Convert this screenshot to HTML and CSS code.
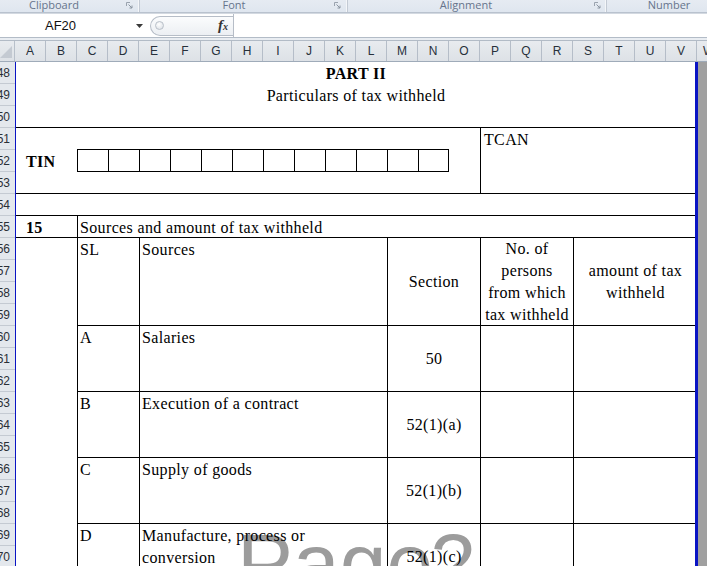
FILE: index.html
```html
<!DOCTYPE html>
<html>
<head>
<meta charset="utf-8">
<link rel="stylesheet" href="styles.css">
</head>
<body>
<div class="ribbon">
  <div class="grp g1"><span class="lbl">Clipboard</span><svg class="launch" width="7" height="7" viewBox="0 0 7 7"><path d="M0.5 4V0.5H4" fill="none" stroke="#9aa3ae"/><path d="M2.5 2.5L6 6M6 3.5V6H3.5" fill="none" stroke="#8a94a0"/></svg></div>
  <div class="grp g2"><span class="lbl">Font</span><svg class="launch" width="7" height="7" viewBox="0 0 7 7"><path d="M0.5 4V0.5H4" fill="none" stroke="#9aa3ae"/><path d="M2.5 2.5L6 6M6 3.5V6H3.5" fill="none" stroke="#8a94a0"/></svg></div>
  <div class="grp g3"><span class="lbl">Alignment</span><svg class="launch" width="7" height="7" viewBox="0 0 7 7"><path d="M0.5 4V0.5H4" fill="none" stroke="#9aa3ae"/><path d="M2.5 2.5L6 6M6 3.5V6H3.5" fill="none" stroke="#8a94a0"/></svg></div>
  <div class="grp g4"><span class="lbl">Number</span></div>
</div>
<div class="fbar">
  <div class="namebox"><span class="nbtext">AF20</span><svg class="nbarrow" width="7" height="4" viewBox="0 0 7 4"><path d="M0 0H7L3.5 4Z" fill="#3a3a3a"/></svg></div>
  <div class="fxzone"><div class="pill"><span class="knob"></span><span class="fx"><i>f</i><span class="fxx">x</span></span></div></div>
  <div class="finput"></div>
</div>
<div class="gap"></div>
<div class="colhead">
  <div class="corner"><svg width="14" height="20" viewBox="0 0 14 20"><path d="M12 5V17H0Z" fill="#c4cad2"/></svg></div>
  <div class="ch">A</div><div class="ch">B</div><div class="ch">C</div><div class="ch">D</div><div class="ch">E</div><div class="ch">F</div><div class="ch">G</div><div class="ch">H</div><div class="ch">I</div><div class="ch">J</div><div class="ch">K</div><div class="ch">L</div><div class="ch">M</div><div class="ch">N</div><div class="ch">O</div><div class="ch">P</div><div class="ch">Q</div><div class="ch">R</div><div class="ch">S</div><div class="ch">T</div><div class="ch">U</div><div class="ch">V</div><div class="ch chw">W</div>
</div>
<div class="sheet">
  <div class="rowhead">
    <div class="rh"><span>48</span></div><div class="rh"><span>49</span></div><div class="rh"><span>50</span></div><div class="rh"><span>51</span></div><div class="rh"><span>52</span></div><div class="rh"><span>53</span></div><div class="rh"><span>54</span></div><div class="rh"><span>55</span></div><div class="rh"><span>56</span></div><div class="rh"><span>57</span></div><div class="rh"><span>58</span></div><div class="rh"><span>59</span></div><div class="rh"><span>60</span></div><div class="rh"><span>61</span></div><div class="rh"><span>62</span></div><div class="rh"><span>63</span></div><div class="rh"><span>64</span></div><div class="rh"><span>65</span></div><div class="rh"><span>66</span></div><div class="rh"><span>67</span></div><div class="rh"><span>68</span></div><div class="rh"><span>69</span></div><div class="rh"><span>70</span></div><div class="rh"><span>71</span></div>
  </div>
  <div class="page">
    <div class="watermark">Page 2</div>

    <div class="c top title"><div class="t1">PART II</div><div class="t2">Particulars of tax withheld</div></div>

    <div class="c tinarea"></div>
    <div class="c top tinlbl">TIN</div>
    <div class="c tinboxes"><span class="box"></span><span class="box"></span><span class="box"></span><span class="box"></span><span class="box"></span><span class="box"></span><span class="box"></span><span class="box"></span><span class="box"></span><span class="box"></span><span class="box"></span><span class="box"></span></div>
    <div class="c top tcan">TCAN</div>

    <div class="c row54"></div>

    <div class="c top n15">15</div>
    <div class="c top srchead">Sources and amount of tax withheld</div>

    <div class="c top tc h-sl">SL</div>
    <div class="c top tc h-src">Sources</div>
    <div class="c tc mid h-sec">Section</div>
    <div class="c tc mid h-np">No. of<br>persons<br>from which<br>tax withheld</div>
    <div class="c tc mid h-amt">amount of tax<br>withheld</div>

    <div class="c top tc ra cs">A</div>
    <div class="c top tc ra cn">Salaries</div>
    <div class="c tc mid ra cx">50</div>
    <div class="c tc ra cp"></div>
    <div class="c tc ra cm"></div>

    <div class="c top tc rb cs">B</div>
    <div class="c top tc rb cn">Execution of a contract</div>
    <div class="c tc mid rb cx">52(1)(a)</div>
    <div class="c tc rb cp"></div>
    <div class="c tc rb cm"></div>

    <div class="c top tc rc cs">C</div>
    <div class="c top tc rc cn">Supply of goods</div>
    <div class="c tc mid rc cx">52(1)(b)</div>
    <div class="c tc rc cp"></div>
    <div class="c tc rc cm"></div>

    <div class="c top tc rd cs">D</div>
    <div class="c top tc rd cn">Manufacture, process or<br>conversion</div>
    <div class="c tc mid rd cx">52(1)(c)</div>
    <div class="c tc rd cp"></div>
    <div class="c tc rd cm"></div>
  </div>
  <div class="outside"></div>
</div>
</body>
</html>
```

FILE: styles.css
```css
* { box-sizing: border-box; margin: 0; padding: 0; }
html, body { width: 707px; height: 566px; overflow: hidden; background: #fff; }
body { font-family: "Liberation Sans", Arial, sans-serif; }

/* ribbon group labels */
.ribbon {
  height: 13px;
  display: flex;
  background: linear-gradient(#e6ebf2, #dfe6ef);
  border-bottom: 1px solid #b9c2ce;
  font-family: "Open Sans", "Liberation Sans", sans-serif;
  font-size: 11px;
  color: #66748c;
  overflow: hidden;
}
.grp {
  display: flex;
  align-items: flex-start;
  height: 12px;
  border-right: 1px solid #c3cad4;
  box-shadow: inset -1px 0 0 #f4f6f9;
}
.g1 { width: 140px; padding-right: 6px; }
.g2 { width: 208px; padding-right: 6px; }
.g3 { width: 259px; padding-right: 5px; }
.g4 { flex: 1; border-right: 0; box-shadow: none; }
.lbl { flex: 1; text-align: center; line-height: 9px; white-space: nowrap; }
.g1 .lbl { padding-right: 18px; }
.g2 .lbl { padding-right: 6px; }
.g3 .lbl { padding-right: 10px; }
.g4 .lbl { padding-left: 24px; }
.launch { margin-top: 2px; flex: none; }

/* formula bar */
.fbar {
  height: 25px;
  display: flex;
  background: #fff;
  border-top: 1px solid #d3d9e1;
  border-bottom: 1px solid #b3bcc7;
}
.namebox { width: 145px; display: flex; align-items: center; }
.nbtext { padding-left: 45px; font-size: 13px; color: #111; }
.nbarrow { margin-left: auto; margin-right: 2px; }
.fxzone { width: 88px; display: flex; align-items: center; padding-left: 5px; }
.pill {
  flex: 1;
  height: 20px;
  display: flex;
  align-items: center;
  border: 1px solid #b6bdc7;
  border-right: 0;
  border-radius: 10px 0 0 10px;
  background: linear-gradient(#fbfcfd, #eceff3);
}
.knob {
  width: 9px; height: 9px;
  margin-left: 4px;
  border-radius: 50%;
  border: 1px solid #b9c0c9;
  background: radial-gradient(circle at 40% 35%, #ffffff, #d7dce2);
}
.fx { margin-left: auto; margin-right: 5px; font-family: "Liberation Serif", serif; font-size: 15px; color: #333; line-height: 1; }
.fx i { font-weight: bold; }
.fxx { font-size: 10px; font-style: italic; font-weight: bold; }
.finput { flex: 1; border-left: 1px solid #b6bdc7; background: #fff; }

.gap { height: 2px; background: #e9edf2; }

/* column headers */
.colhead {
  height: 22px;
  display: flex;
  border-top: 1px solid #b2bbc6;
  border-bottom: 1px solid #9fabb9;
  background: linear-gradient(#e8ebef, #dde1e6);
  font-size: 12px;
  color: #27303b;
  overflow: hidden;
}
.corner { width: 15px; flex: none; border-right: 1px solid #b8c0ca; }
.corner svg { display: block; }
.ch {
  width: 31px; flex: none;
  border-right: 1px solid #b5bdc8;
  display: flex; align-items: center; justify-content: center;
}
.chw { width: 10px; justify-content: flex-start; padding-left: 6px; border-right: 0; }

/* sheet */
.sheet { display: flex; height: 504px; }
.rowhead { width: 15px; flex: none; background: #e4e8ed; }
.rh {
  height: 22px;
  border-bottom: 1px solid #c4cad2;
  display: flex; align-items: center; justify-content: flex-end;
  overflow: hidden;
  padding-right: 5px;
  font-size: 12px;
  color: #2a2f36;
}
.page {
  position: relative;
  width: 682px; flex: none;
  display: grid;
  grid-template-columns: repeat(22, 31px);
  grid-template-rows: repeat(24, 22px);
  background: #fff;
  font-family: "Liberation Serif", "Times New Roman", serif;
  font-size: 16px;
  letter-spacing: 0.35px;
  line-height: 22px;
  color: #000;
}
.page::before {
  content: ""; position: absolute; left: 0; top: 0; bottom: 0; width: 1px; background: #0a14c4; z-index: 3;
}
.page::after {
  content: ""; position: absolute; right: -1px; top: 0; bottom: 0; width: 3px; background: #0a14c4; z-index: 3;
}
.outside { flex: 1; background: #a0a0a0; }

.watermark {
  position: absolute;
  left: 222px;
  top: 459px;
  z-index: 0;
  font-family: "Liberation Sans", Arial, sans-serif;
  font-size: 84px;
  letter-spacing: 0;
  word-spacing: -0.32em;
  line-height: 1;
  color: #9c9c9c;
  white-space: nowrap;
}
.c { position: relative; z-index: 1; white-space: nowrap; }
.top { padding-top: 1px; }

.title { grid-column: 1 / -1; grid-row: 1 / 4; border-bottom: 1px solid #000; text-align: center; }
.t1 { font-weight: bold; }
.tinarea { grid-column: 1 / 16; grid-row: 4 / 7; border-bottom: 1px solid #000; }
.tinlbl { grid-column: 1 / 3; grid-row: 5; padding-left: 11px; font-weight: bold; }
.tinboxes { grid-column: 3 / 15; grid-row: 5; display: flex; margin-top: -1px; margin-right: -1px; }
.box { width: 31px; border: 1px solid #000; border-right: 0; }
.box:last-child { border-right: 1px solid #000; }
.tcan { grid-column: 16 / 23; grid-row: 4 / 7; border-left: 1px solid #000; border-bottom: 1px solid #000; padding-left: 3px; }
.row54 { grid-column: 1 / -1; grid-row: 7; border-bottom: 1px solid #000; }
.n15 { grid-column: 1 / 3; grid-row: 8; border-bottom: 1px solid #000; padding-left: 11px; font-weight: bold; }
.srchead { grid-column: 3 / 23; grid-row: 8; border-left: 1px solid #000; border-bottom: 1px solid #000; padding-left: 2px; }

.tc { border-left: 1px solid #000; border-bottom: 1px solid #000; padding-left: 2px; }
.mid { display: flex; align-items: center; justify-content: center; text-align: center; padding-left: 0; }

.h-sl { grid-column: 3 / 5; grid-row: 9 / 13; }
.h-src { grid-column: 5 / 13; grid-row: 9 / 13; }
.h-sec { grid-column: 13 / 16; grid-row: 9 / 13; }
.h-np { grid-column: 16 / 19; grid-row: 9 / 13; }
.h-amt { grid-column: 19 / 23; grid-row: 9 / 13; }

.ra { grid-row: 13 / 16; }
.rb { grid-row: 16 / 19; }
.rc { grid-row: 19 / 22; }
.rd { grid-row: 22 / 25; }
.cs { grid-column: 3 / 5; }
.cn { grid-column: 5 / 13; }
.cx { grid-column: 13 / 16; }
.cp { grid-column: 16 / 19; }
.cm { grid-column: 19 / 23; }
```
